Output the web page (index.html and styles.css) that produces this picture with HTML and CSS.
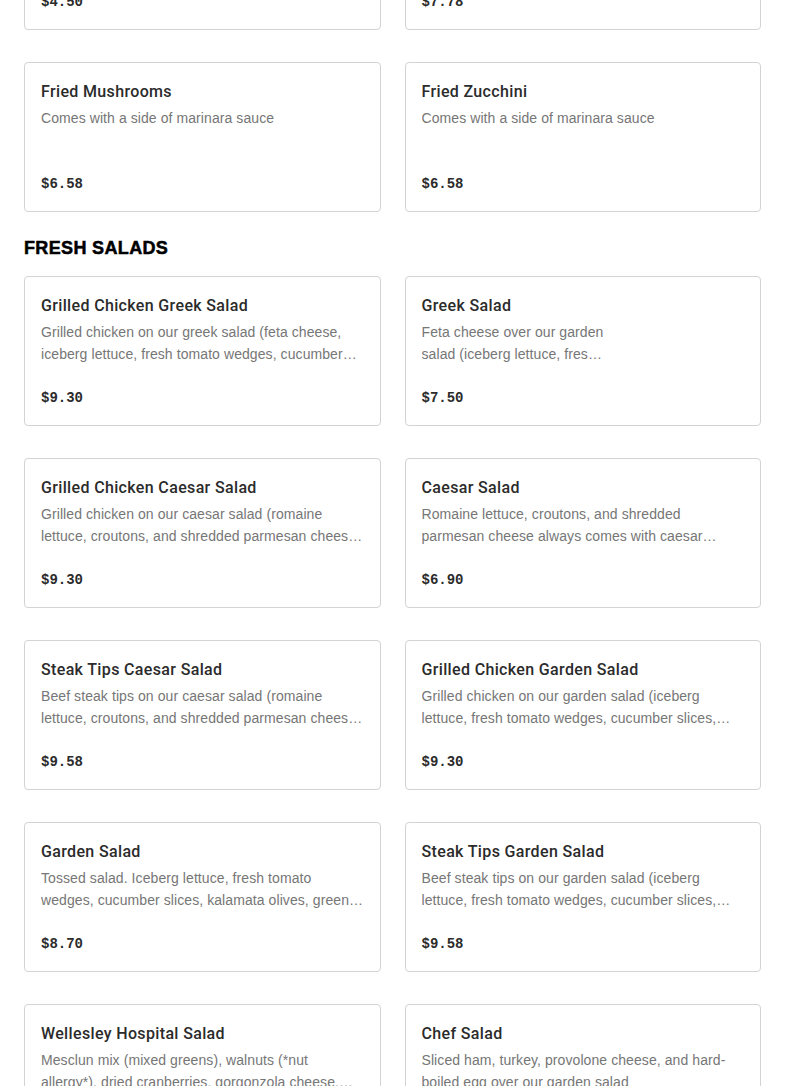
FILE: index.html
```html
<!DOCTYPE html>
<html lang="en">
<head>
<meta charset="utf-8">
<title>Menu</title>
<link rel="stylesheet" href="styles.css">
</head>
<body>
<main class="menu">
  <section class="section section--first">
    <div class="grid">
      <article class="card">
        <h3 class="card__title">Onion Rings</h3>
        <p class="card__desc">Crispy battered onion rings</p>
        <div class="card__price">$4.50</div>
      </article>
      <article class="card">
        <h3 class="card__title">Chicken Fingers</h3>
        <p class="card__desc">Served with your choice of dipping sauce</p>
        <div class="card__price">$7.78</div>
      </article>
      <article class="card">
        <h3 class="card__title">Fried Mushrooms</h3>
        <p class="card__desc">Comes with a side of marinara sauce</p>
        <div class="card__price">$6.58</div>
      </article>
      <article class="card">
        <h3 class="card__title">Fried Zucchini</h3>
        <p class="card__desc">Comes with a side of marinara sauce</p>
        <div class="card__price">$6.58</div>
      </article>
    </div>
  </section>

  <section class="section">
    <h2 class="section__title">FRESH SALADS</h2>
    <div class="grid">
      <article class="card">
        <h3 class="card__title">Grilled Chicken Greek Salad</h3>
        <p class="card__desc">Grilled chicken on our greek salad (feta cheese, iceberg lettuce, fresh tomato wedges, cucumber slices, kalamata olives, green peppers, and red onions)</p>
        <div class="card__price">$9.30</div>
      </article>
      <article class="card">
        <h3 class="card__title">Greek Salad</h3>
        <p class="card__desc card__desc--narrow">Feta cheese over our garden salad (iceberg lettuce, fresh tomato wedges, cucumber slices)</p>
        <div class="card__price">$7.50</div>
      </article>
      <article class="card">
        <h3 class="card__title">Grilled Chicken Caesar Salad</h3>
        <p class="card__desc">Grilled chicken on our caesar salad (romaine lettuce, croutons, and shredded parmesan cheese) always comes with caesar dressing</p>
        <div class="card__price">$9.30</div>
      </article>
      <article class="card">
        <h3 class="card__title">Caesar Salad</h3>
        <p class="card__desc">Romaine lettuce, croutons, and shredded parmesan cheese always comes with caesar dressing on the side</p>
        <div class="card__price">$6.90</div>
      </article>
      <article class="card">
        <h3 class="card__title">Steak Tips Caesar Salad</h3>
        <p class="card__desc">Beef steak tips on our caesar salad (romaine lettuce, croutons, and shredded parmesan cheese) always comes with caesar dressing</p>
        <div class="card__price">$9.58</div>
      </article>
      <article class="card">
        <h3 class="card__title">Grilled Chicken Garden Salad</h3>
        <p class="card__desc">Grilled chicken on our garden salad (iceberg lettuce, fresh tomato wedges, cucumber slices, kalamata olives, green peppers)</p>
        <div class="card__price">$9.30</div>
      </article>
      <article class="card">
        <h3 class="card__title">Garden Salad</h3>
        <p class="card__desc">Tossed salad. Iceberg lettuce, fresh tomato wedges, cucumber slices, kalamata olives, green peppers, and red onions</p>
        <div class="card__price">$8.70</div>
      </article>
      <article class="card">
        <h3 class="card__title">Steak Tips Garden Salad</h3>
        <p class="card__desc">Beef steak tips on our garden salad (iceberg lettuce, fresh tomato wedges, cucumber slices, kalamata olives, green peppers)</p>
        <div class="card__price">$9.58</div>
      </article>
      <article class="card">
        <h3 class="card__title">Wellesley Hospital Salad</h3>
        <p class="card__desc">Mesclun mix (mixed greens), walnuts (*nut allergy*), dried cranberries, gorgonzola cheese, and balsamic vinaigrette</p>
        <div class="card__price">$9.90</div>
      </article>
      <article class="card">
        <h3 class="card__title">Chef Salad</h3>
        <p class="card__desc">Sliced ham, turkey, provolone cheese, and hard-boiled egg over our garden salad</p>
        <div class="card__price">$9.30</div>
      </article>
    </div>
  </section>
</main>
</body>
</html>
```
FILE: styles.css
```css
* { box-sizing: border-box; }

html, body {
  margin: 0;
  padding: 0;
  background: #ffffff;
}

body {
  font-family: "Liberation Sans", Arial, sans-serif;
  color: #2b2b2b;
  overflow: hidden;
}

.menu {
  padding: 0 24px;
  margin-top: -120px;
}

.section {
  margin-top: 24px;
}

.section--first {
  margin-top: 0;
}

.section__title {
  margin: 0 0 16px;
  font-family: "Liberation Sans", Arial, sans-serif;
  font-size: 18px;
  line-height: 24px;
  font-weight: 700;
  color: #000;
  letter-spacing: 0.35px;
  -webkit-text-stroke: 0.5px #000;
}

.grid {
  display: grid;
  grid-template-columns: 1fr 1fr;
  column-gap: 24px;
  row-gap: 32px;
}

.card {
  border: 1px solid #d3d3d3;
  border-radius: 4px;
  padding: 17px 16px 15px;
  height: 150px;
  display: flex;
  flex-direction: column;
  background: #fff;
}

.card__title {
  margin: 1px 0 4px;
  font-family: Roboto, "Liberation Sans", Arial, sans-serif;
  font-size: 16px;
  line-height: 22px;
  font-weight: 500;
  color: #2b2b2b;
  letter-spacing: 0.35px;
}

.card__desc {
  margin: 0;
  font-size: 14px;
  line-height: 22px;
  letter-spacing: 0.08px;
  color: #767676;
  height: 44px;
  display: -webkit-box;
  -webkit-line-clamp: 2;
  -webkit-box-orient: vertical;
  overflow: hidden;
}

.card__desc--narrow {
  max-width: 186px;
}

.card__price {
  margin-top: auto;
  font-family: "Liberation Mono", "Courier New", monospace;
  font-weight: 700;
  font-size: 14px;
  line-height: 24px;
  color: #2b2b2b;
}
```
